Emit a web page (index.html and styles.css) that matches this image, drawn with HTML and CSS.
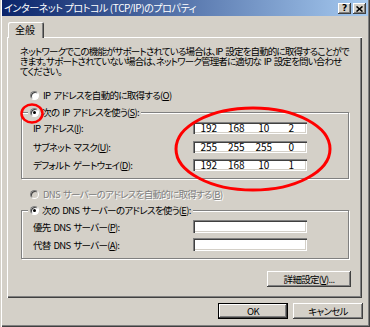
FILE: index.html
```html
<!DOCTYPE html>
<html lang="ja">
<head>
<meta charset="utf-8">
<title>インターネット プロトコル (TCP/IP)のプロパティ</title>
<link rel="stylesheet" href="styles.css">
</head>
<body>
<div class="window">
  <div class="titlebar">
    <span class="title">インターネット プロトコル (TCP/IP)のプロパティ</span>
    <div class="caps">
      <span class="capbtn help">?</span>
      <span class="capbtn close"><svg width="7" height="6" viewBox="0 0 7 6"><path d="M0.5 0.5 L6.5 5.5 M6.5 0.5 L0.5 5.5" stroke="#000" stroke-width="1.6" fill="none"/></svg></span>
    </div>
  </div>
  <div class="body">
    <div class="tabs"><div class="tab">全般</div></div>
    <div class="panel">
      <p class="desc">ネットワークでこの機能がサポートされている場合は、IP 設定を自動的に取得することがで<br>きます。サポートされていない場合は、ネットワーク管理者に適切な IP 設定を問い合わせ<br>てください。</p>
      <div class="opt opt-auto"><span class="radio"></span><span>IP アドレスを自動的に取得する(<u>O</u>)</span></div>
      <div class="group group-ip">
        <div class="legend"><span class="radio on"></span><span>次の IP アドレスを使う(<u>S</u>):</span></div>
        <div class="rows rows-ip">
          <div class="row"><span class="lbl">IP アドレス(<u>I</u>):</span><span class="field ip"><span>192</span><span>168</span><span>10</span><span>2</span></span></div>
          <div class="row"><span class="lbl">サブネット マスク(<u>U</u>):</span><span class="field ip"><span>255</span><span>255</span><span>255</span><span>0</span></span></div>
          <div class="row"><span class="lbl">デフォルト ゲートウェイ(<u>D</u>):</span><span class="field ip"><span>192</span><span>168</span><span>10</span><span>1</span></span></div>
        </div>
      </div>
      <div class="opt opt-dns disabled"><span class="radio"></span><span>DNS サーバーのアドレスを自動的に取得する(<u>B</u>)</span></div>
      <div class="group group-dns">
        <div class="legend"><span class="radio on"></span><span>次の DNS サーバーのアドレスを使う(<u>E</u>):</span></div>
        <div class="rows rows-dns">
          <div class="row"><span class="lbl">優先 DNS サーバー(<u>P</u>):</span><span class="field"></span></div>
          <div class="row"><span class="lbl">代替 DNS サーバー(<u>A</u>):</span><span class="field"></span></div>
        </div>
      </div>
      <div class="adv-row"><button class="btn adv">詳細設定(<u>V</u>)...</button></div>
    </div>
    <div class="footer">
      <button class="btn default">OK</button>
      <button class="btn">キャンセル</button>
    </div>
  </div>
  <svg class="marks" width="370" height="327" viewBox="0 0 370 327">
    <ellipse cx="253" cy="149" rx="77" ry="41" fill="none" stroke="#ff0000" stroke-width="3"/>
    <ellipse cx="32" cy="113.5" rx="10.5" ry="9" fill="none" stroke="#ff0000" stroke-width="2.5"/>
  </svg>
</div>
</body>
</html>
```
FILE: styles.css
```css
html, body {
  margin: 0;
  padding: 0;
  background: #D4D0C8;
}

body {
  font-family: "Noto Sans CJK JP", "Noto Sans", sans-serif;
  font-size: 9.5px;
  font-feature-settings: "palt";
  letter-spacing: -0.7px;
  word-spacing: 1.5px;
  color: #000;
}

.window {
  position: relative;
  width: 370px;
  height: 327px;
  box-sizing: border-box;
  padding: 0 2px 2px 2px;
  background: #D4D0C8;
  box-shadow: inset 1px 0 #D4D0C8, inset 2px 0 #ffffff, inset -1px -1px #404040, inset -2px -2px #808080;
  overflow: hidden;
}

.titlebar {
  height: 16px;
  display: flex;
  align-items: center;
  justify-content: space-between;
  padding: 0 2px 0 2px;
  background: linear-gradient(to right, #0A246A, #A6CAF0);
}

.title {
  color: #fff;
  font-size: 10px;
  letter-spacing: -0.4px;
  word-spacing: 0;
  line-height: 10px;
  white-space: nowrap;
}

.caps {
  display: flex;
  gap: 2px;
  margin-top: 1px;
}

.capbtn {
  width: 13px;
  height: 11px;
  box-sizing: border-box;
  background: #D4D0C8;
  box-shadow: inset -1px -1px #404040, inset 1px 1px #ffffff, inset -2px -2px #808080;
  display: flex;
  align-items: center;
  justify-content: center;
  font-family: "DejaVu Sans", sans-serif;
  font-weight: bold;
  font-size: 9px;
  line-height: 9px;
  letter-spacing: 0;
}

.body {
  display: flex;
  flex-direction: column;
}

.tabs {
  display: flex;
  padding: 6px 0 0 6px;
  margin-bottom: -1px;
  position: relative;
  z-index: 1;
}

.tab {
  width: 36px;
  height: 16px;
  box-sizing: border-box;
  display: flex;
  align-items: center;
  justify-content: center;
  font-size: 10px;
  line-height: 10px;
  letter-spacing: 0;
  background: #D4D0C8;
  border-radius: 2px 2px 0 0;
  box-shadow: inset 1px 1px #ffffff, inset -1px 0 #404040, inset -2px 0 #808080;
  padding-right: 2px;
}

.panel {
  width: 355px;
  height: 261px;
  margin-left: 5px;
  box-sizing: border-box;
  box-shadow: inset 1px 1px #ffffff, inset -1px -1px #404040, inset -2px -2px #808080;
  padding-top: 9px;
  display: flex;
  flex-direction: column;
}

.desc {
  margin: 0;
  padding-left: 13px;
  line-height: 10.2px;
  letter-spacing: -0.85px;
  white-space: nowrap;
}

.opt {
  display: flex;
  align-items: center;
  gap: 4px;
  height: 12px;
  line-height: 10px;
  padding-left: 23px;
  white-space: nowrap;
}

.opt-auto {
  margin-top: 12.5px;
}

.opt-dns {
  margin-top: 9px;
}

.disabled {
  color: #808080;
  text-shadow: 1px 1px 0 #ffffff;
}

.radio {
  width: 9px;
  height: 9px;
  box-sizing: border-box;
  border-radius: 50%;
  background: #fff;
  border: 1px solid;
  border-color: #808080 #ffffff #ffffff #808080;
  box-shadow: inset 1px 1px 0 #404040;
  position: relative;
  flex: none;
}

.disabled .radio {
  background: #D4D0C8;
}

.radio.on::after {
  content: "";
  position: absolute;
  left: 2px;
  top: 2px;
  width: 3px;
  height: 3px;
  border-radius: 50%;
  background: #000;
}

.group {
  margin-left: 14px;
  width: 328px;
  box-sizing: border-box;
  border: 1px solid #808080;
  box-shadow: inset 1px 1px #ffffff, 1px 1px #ffffff;
  display: flex;
  flex-direction: column;
}

.group-ip {
  margin-top: 11px;
  height: 67px;
}

.group-dns {
  margin-top: 10px;
  height: 49px;
}

.legend {
  display: flex;
  align-items: center;
  gap: 3px;
  width: max-content;
  height: 12px;
  line-height: 10px;
  margin: -7px 0 0 6px;
  padding: 0 2px;
  background: #D4D0C8;
  white-space: nowrap;
}

.rows {
  display: flex;
  flex-direction: column;
  margin-top: 4px;
}

.rows-ip {
  gap: 6.5px;
}

.rows-dns {
  gap: 5px;
}

.row {
  display: grid;
  grid-template-columns: 160px 114px;
  align-items: center;
  padding-left: 11px;
  height: 12px;
  line-height: 10px;
  white-space: nowrap;
}

.rows-dns .row {
  height: 13px;
}

.field {
  height: 100%;
  box-sizing: border-box;
  background: #fff;
  box-shadow: inset 1px 1px #808080, inset 2px 2px #404040, inset -1px -1px #ffffff, inset -2px -2px #D4D0C8;
}

.field.ip {
  display: flex;
  align-items: center;
  padding: 0 2px;
}

.field.ip span {
  flex: 1;
  text-align: center;
  font-size: 10px;
  line-height: 10px;
  letter-spacing: 0;
}

.adv-row {
  display: flex;
  justify-content: flex-end;
  padding-right: 11px;
  margin-top: 12px;
}

.btn {
  font: inherit;
  letter-spacing: inherit;
  word-spacing: inherit;
  font-feature-settings: inherit;
  color: #000;
  background: #D4D0C8;
  border: none;
  padding: 0;
  margin: 0;
  height: 16px;
  line-height: 10px;
  box-sizing: border-box;
  box-shadow: inset -1px -1px #404040, inset 1px 1px #ffffff, inset -2px -2px #808080;
  display: flex;
  align-items: center;
  justify-content: center;
}

.adv {
  width: 84px;
}

.footer {
  display: flex;
  justify-content: flex-end;
  gap: 5px;
  padding-right: 5px;
  margin-top: 5px;
}

.footer .btn {
  width: 70px;
}

.btn.default {
  border: 1px solid #000;
}

.marks {
  position: absolute;
  left: 0;
  top: 0;
  pointer-events: none;
}
```
